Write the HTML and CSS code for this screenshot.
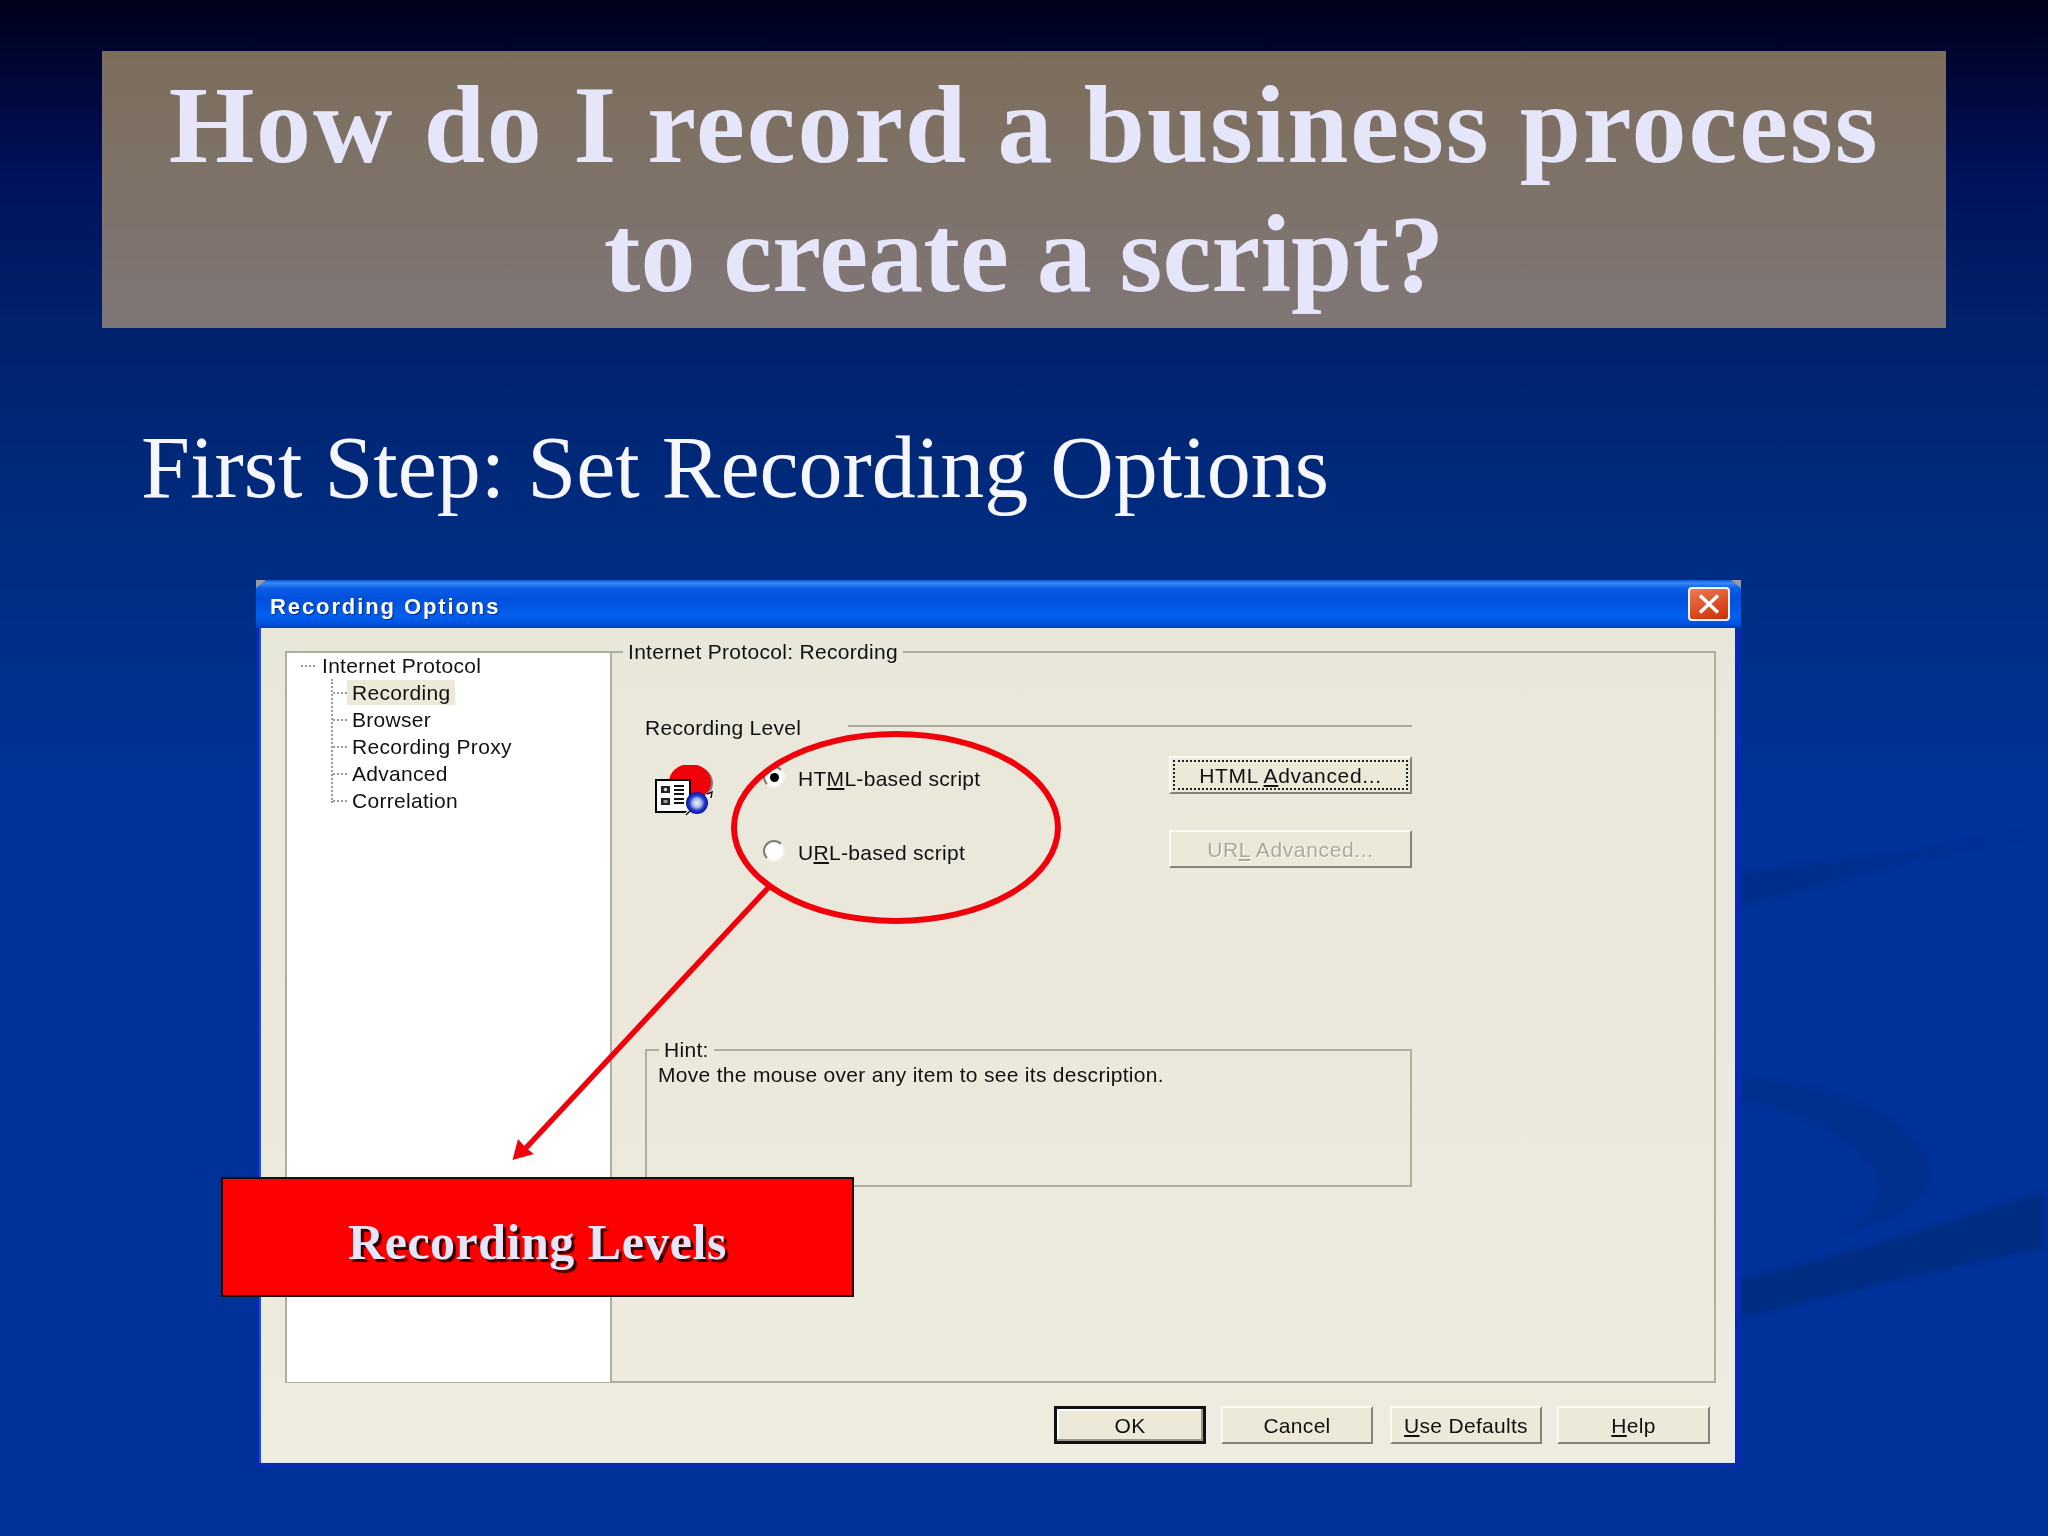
FILE: index.html
```html
<!DOCTYPE html>
<html lang="en">
<head>
<meta charset="utf-8">
<title>How do I record a business process to create a script?</title>
<link rel="stylesheet" href="styles.css">
</head>
<body>
<svg class="backdrop" width="2048" height="1536" viewBox="0 0 2048 1536" aria-hidden="true">
  <defs>
    <linearGradient id="fade" x1="1741" x2="2045" y1="0" y2="0" gradientUnits="userSpaceOnUse">
      <stop offset="0" stop-color="#002a80" stop-opacity=".5"/>
      <stop offset=".6" stop-color="#002a80" stop-opacity=".3"/>
      <stop offset="1" stop-color="#002a80" stop-opacity=".04"/>
    </linearGradient>
    <radialGradient id="globe" cx=".5" cy=".5" r=".5">
      <stop offset="0" stop-color="#f4f4f4"/>
      <stop offset=".4" stop-color="#a8b8e0"/>
      <stop offset=".7" stop-color="#2038c8"/>
      <stop offset="1" stop-color="#0a14a0"/>
    </radialGradient>
  </defs>
  <path class="swoosh" d="M1741 873C1800 865 1880 855 1919 851L2040 828L2040 835C1940 850 1830 885 1741 905Z" fill="url(#fade)"/>
  <path class="swoosh" d="M1741 1077C1830 1085 1925 1120 1931 1172C1932 1200 1890 1222 1842 1232C1870 1215 1885 1195 1877 1178C1865 1140 1800 1110 1741 1098Z" fill="#002f8e"/>
  <path class="swoosh" d="M1741 1279C1840 1258 1950 1222 2044 1192L2044 1248C1950 1265 1840 1295 1741 1317Z" fill="#002c82"/>
</svg>

<main class="slide">
  <h1 class="title"><span class="title-line-one">How do I record a business process</span><br><span class="title-line-two">to create a script?</span></h1>
  <h2 class="subtitle">First Step: Set Recording Options</h2>

  <section class="dialog">
    <header class="titlebar">
      <span class="titlebar-text">Recording Options</span>
      <button class="close" type="button" aria-label="Close">
        <svg width="24" height="22" viewBox="0 0 24 22"><path d="M3 2.500L21 19.500M21 2.500L3 19.500" stroke="#fff" stroke-width="3.400" fill="none"/></svg>
      </button>
    </header>
    <div class="client">
      <div class="main">
        <nav class="tree">
          <div class="tree-root"><span class="tick tick-root"></span><span class="node">Internet Protocol</span></div>
          <div class="tree-children">
            <div class="tree-row"><span class="tick"></span><span class="node selected">Recording</span></div>
            <div class="tree-row"><span class="tick"></span><span class="node">Browser</span></div>
            <div class="tree-row"><span class="tick"></span><span class="node">Recording Proxy</span></div>
            <div class="tree-row"><span class="tick"></span><span class="node">Advanced</span></div>
            <div class="tree-row"><span class="tick"></span><span class="node">Correlation</span></div>
          </div>
        </nav>
        <fieldset class="panel">
          <legend>Internet Protocol: Recording</legend>
          <div class="panel-inner">
            <div class="level-head"><span class="level-label">Recording Level</span><span class="level-line"></span></div>
            <div class="options">
              <svg class="level-icon" width="61" height="53" viewBox="14 15 61 53" aria-hidden="true">
                <ellipse cx="52" cy="33" rx="21" ry="18" fill="#5a4a4a" opacity=".7"/>
                <ellipse cx="50" cy="32" rx="21" ry="18" fill="#f00008"/>
                <rect x="16" y="30" width="34" height="32" fill="#fff" stroke="#000" stroke-width="2"/>
                <rect x="21" y="36" width="9" height="7" fill="#222"/>
                <circle cx="25.500" cy="39.500" r="1.800" fill="#ddd"/>
                <rect x="21" y="48" width="9" height="7" fill="#222"/>
                <rect x="23.500" y="50" width="4" height="3" fill="#999"/>
                <path d="M34 36H44M34 40H44M34 44H44M34 49H44M34 53H44" stroke="#111" stroke-width="1.800"/>
                <path d="M46 65L72 42" stroke="#fff" stroke-width="4"/>
                <circle cx="57" cy="53" r="11" fill="url(#globe)"/>
                <path d="M46 65L50 61M67 44L72 42L71 48" stroke="#111" stroke-width="1.500" fill="none"/>
              </svg>
              <div class="radios">
                <label class="radio-row"><span class="radio on"></span><span>HT<u>M</u>L-based script</span></label>
                <label class="radio-row"><span class="radio"></span><span>U<u>R</u>L-based script</span></label>
              </div>
              <div class="side-buttons">
                <button class="btn wide focus" type="button">HTML <u>A</u>dvanced...</button>
                <button class="btn wide" type="button" disabled>UR<u>L</u> Advanced...</button>
              </div>
            </div>
            <fieldset class="hint">
              <legend>Hint:</legend>
              <p>Move the mouse over any item to see its description.</p>
            </fieldset>
          </div>
        </fieldset>
      </div>
      <footer class="footer">
        <button class="btn default" type="button">OK</button>
        <button class="btn cancel" type="button">Cancel</button>
        <button class="btn" type="button"><u>U</u>se Defaults</button>
        <button class="btn help" type="button"><u>H</u>elp</button>
      </footer>
    </div>
  </section>
</main>

<svg class="annotation" width="2048" height="1536" viewBox="0 0 2048 1536" aria-hidden="true">
  <ellipse cx="896" cy="827.500" rx="162" ry="93.500" fill="none" stroke="#f0000a" stroke-width="6"/>
  <path d="M768 888L525 1149" stroke="#f0000a" stroke-width="5.500" fill="none"/>
  <path d="M512.500 1160L518 1139L526 1148L534 1154Z" fill="#f0000a"/>
</svg>
<div class="callout">Recording Levels</div>
</body>
</html>
```

FILE: styles.css
```css
* { box-sizing: border-box; }

html, body {
  margin: 0;
  width: 2048px;
  height: 1536px;
  overflow: hidden;
}

body {
  position: relative;
  background: linear-gradient(180deg, #00001a 0, #00115a 170px, #00226c 330px, #002c80 540px, #00329a 820px, #00329a 1536px);
}

.backdrop, .annotation { position: absolute; left: 0; top: 0; }
.annotation { pointer-events: none; }
.swoosh { filter: blur(2px); }

.slide {
  position: relative;
  padding: 51px 102px 0;
}

.title {
  margin: 0;
  width: 1844px;
  height: 277px;
  padding-top: 10px;
  background: linear-gradient(180deg, #7d6e5c, #7f7676);
  color: #e6e6fa;
  font: bold 110px/128.500px "Liberation Serif", serif;
  text-align: center;
}

.title-line-one { letter-spacing: 1.900px; }
.title-line-two { letter-spacing: .150px; }

.subtitle {
  margin: 90px 0 0 39px;
  color: #f6f6ff;
  font: normal 88px/100px "Liberation Serif", serif;
}

.dialog {
  position: relative;
  margin: 62px 0 0 154px;
  width: 1485px;
  height: 887px;
  padding: 0 6px 4px 5px;
  background: #0a2ab4;
  border-radius: 4px 4px 0 0;
  font: 21px/27px "Liberation Sans", sans-serif;
  letter-spacing: .300px;
  color: #111;
  filter: blur(.4px);
}

.dialog::before, .dialog::after {
  content: "";
  position: absolute;
  top: 0;
  width: 10px;
  height: 8px;
  background: #9a9aa0;
}
.dialog::before { left: 0; clip-path: polygon(0 0, 100% 0, 0 100%); }
.dialog::after { right: 0; clip-path: polygon(0 0, 100% 0, 100% 100%); }

.titlebar {
  display: flex;
  align-items: center;
  height: 48px;
  margin: 0 -6px 0 -5px;
  padding: 0 11px 0 14px;
  background: linear-gradient(180deg, #0a56d8 0, #3a8cf2 3px, #0a5fe8 8px, #0050dc 18px, #0060ee 36px, #0054e0 43px, #0040c0 48px);
  border-radius: 4px 4px 0 0;
}

.titlebar-text {
  padding-top: 4px;
  color: #fff;
  font: bold 22px/27px "Liberation Sans", sans-serif;
  letter-spacing: 1.900px;
  text-shadow: 1px 1px 1px #0a2a80;
}

.close {
  display: flex;
  align-items: center;
  justify-content: center;
  margin-left: auto;
  width: 42px;
  height: 34px;
  padding: 0;
  border: 2px solid #f2f2f8;
  border-radius: 4px;
  background: linear-gradient(160deg, #ea7c54, #dc4a20 60%, #c23408);
}

.client {
  height: 835px;
  padding: 23px 19px 0 24px;
  background: linear-gradient(180deg, #e8e8da 0, #ebe8db 40%, #eeebdf 100%);
  border-bottom: 1px solid #d8e8f0;
  box-shadow: -2px 0 0 #1552d8;
}

.main {
  display: flex;
  height: 732px;
}

.tree {
  width: 326px;
  flex: none;
  background: #fff;
  border: 2px solid #b2ae9e;
  border-right-width: 1px;
  border-bottom-width: 1px;
}

.tree-root, .tree-row {
  display: flex;
  align-items: center;
  height: 27px;
  white-space: nowrap;
}

.tree-root { margin-top: -1px; }

.tick {
  flex: none;
  width: 14px;
  border-top: 2px dotted #9a9a9a;
}

.tick-root { margin: 0 6px 0 14px; }

.tree-children {
  margin: 0 0 0 44px;
  height: 124px;
  border-left: 2px dotted #9a9a9a;
}

.node { padding: 0 5px; line-height: 25px; }
.tree-root .node { padding: 0 0 0 1px; }
.selected { background: #ece9d8; }

.panel {
  flex: 1;
  min-width: 0;
  margin: 0;
  padding: 0;
  border: 2px solid #b2ae9e;
  border-left-width: 1px;
}

.panel > legend {
  height: 2px;
  line-height: 2px;
  margin-left: 11px;
  padding: 0 5px;
}

.panel-inner { padding: 61px 0 0 33px; width: 800px; }

.level-head {
  display: flex;
  align-items: center;
  width: 767px;
}

.level-label { flex: 0 0 203px; }
.level-line { flex: 1; height: 2px; margin-bottom: 3px; background: #aca899; }

.options { display: flex; align-items: flex-start; width: 767px; }

.level-icon { flex: none; margin: 24px 0 0 9px; }

.radios {
  display: flex;
  flex-direction: column;
  gap: 47px;
  margin: 24px 0 0 48px;
}

.radio-row {
  display: flex;
  align-items: center;
  gap: 13px;
  height: 27px;
}

.radio {
  position: relative;
  flex: none;
  width: 22px;
  height: 22px;
  margin-bottom: 3px;
  border: 2px solid;
  border-color: #7d7d78 #f4f2ea #f4f2ea #7d7d78;
  border-radius: 50%;
  background: #fff;
  display: flex;
  align-items: center;
  justify-content: center;
}

.radio.on::after {
  content: "";
  width: 9px;
  height: 9px;
  border-radius: 50%;
  background: #000;
}

.side-buttons {
  display: flex;
  flex-direction: column;
  gap: 36px;
  margin: 15px 0 0 auto;
}

.btn {
  width: 152px;
  height: 38px;
  padding: 0;
  border: 2px solid;
  border-color: #fbfaf5 #85847a #85847a #fbfaf5;
  background: #ece9d8;
  color: #111;
  font: 21px/27px "Liberation Sans", sans-serif;
  letter-spacing: .300px;
  white-space: nowrap;
}

.btn.wide { width: 243px; letter-spacing: .650px; }
.btn.focus { outline: 2px dotted #222; outline-offset: -6px; }
.btn:disabled { color: #aca899; text-shadow: 1px 1px 0 #fff; }
.btn.default { border: 3px solid #111; box-shadow: inset -2px -2px 0 #9a988a, inset 2px 2px 0 #fff; }
.btn.cancel { margin-right: 2px; }
.btn.help { width: 153px; }

.hint {
  width: 767px;
  height: 138px;
  margin: 181px 0 0;
  padding: 10px 0 0 11px;
  border: 2px solid #b2ae9e;
}

.hint > legend {
  height: 2px;
  line-height: 2px;
  margin-left: 1px;
  padding: 0 5px;
}

.hint p { margin: 0; }

.footer {
  display: flex;
  justify-content: flex-end;
  gap: 15px;
  padding: 23px 6px 0 0;
}

.callout {
  position: absolute;
  left: 221px;
  top: 1177px;
  width: 633px;
  height: 120px;
  padding-top: 10px;
  border: 2px solid #111;
  background: #f00;
  color: #e6e6fa;
  font: bold 50px/106px "Liberation Serif", serif;
  letter-spacing: .500px;
  text-align: center;
  text-shadow: 3px 3px 1px #300;
}
```
